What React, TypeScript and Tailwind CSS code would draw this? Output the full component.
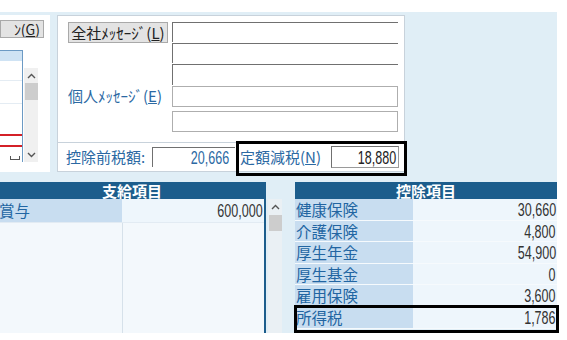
import React from 'react';

const jp = { fontFamily: '"Noto Sans CJK JP", "Noto Sans", sans-serif' };
const num = { fontFamily: '"Liberation Sans", Arial, sans-serif' };

const deductions = [
  { label: '健康保険', value: '30,660', h: 'h-[22px]' },
  { label: '介護保険', value: '4,800', h: 'h-[21px]' },
  { label: '厚生年金', value: '54,900', h: 'h-[22px]' },
  { label: '厚生基金', value: '0', h: 'h-[21px]' },
  { label: '雇用保険', value: '3,600', h: 'h-[22px]' },
  { label: '所得税', value: '1,786', h: 'h-[22px]' },
];

function Caret({ down }: { down?: boolean }) {
  return (
    <svg width="9" height="6" viewBox="0 0 9 6" className="block">
      <path d={down ? 'M1 1 L4.5 4.5 L8 1' : 'M1 5 L4.5 1.5 L8 5'} fill="none" stroke="#555" strokeWidth="1.4" />
    </svg>
  );
}

// narrow digits like the original UI font
function Num({ children }: { children: React.ReactNode }) {
  return (
    <span className="inline-block origin-right scale-x-[0.66] text-[19px] leading-none whitespace-nowrap" style={num}>
      {children}
    </span>
  );
}

export default function App() {
  return (
    <div className="relative w-[567px] h-[340px] bg-white overflow-hidden" style={jp}>
      <div className="pt-[12px]">
        <div className="w-[557px] h-[321px] bg-[#e0eef6] pt-[3px] flex flex-col">
          {/* top row */}
          <div className="flex h-[157px]">
            {/* left panel (cut off) */}
            <div className="w-[50px] h-full bg-white flex flex-col">
              <div className="mt-[5px] w-[44px] h-[18px] bg-[#e3e3e3] border border-[#a9a9a9] flex items-center justify-end pr-[3px] overflow-hidden text-[14px] leading-none text-[#222] whitespace-nowrap">
                ﾝ(<span className="underline">G</span>)
              </div>
              <div className="mt-[12px] flex">
                <div className="w-[23px] h-[112px] border-t border-r border-[#6c9ac4] flex flex-col">
                  <div className="h-[10px] bg-[#cfe3f4]" />
                  <div className="h-[20px] border-b border-[#e4ecf3]" />
                  <div className="h-[23px] border-b border-[#e4ecf3]" />
                  <div className="h-[30px]" />
                  <div className="h-[2px] bg-[#d42027]" />
                  <div className="h-[9px]" />
                  <div className="h-[2px] bg-[#d42027]" />
                  <div className="flex-1 flex items-end pb-[2px] pl-[10px]">
                    <div className="w-[10px] h-[4px] border-b border-l border-r border-[#555]" />
                  </div>
                </div>
                <div className="ml-[1px] mt-[18px] w-[14px] h-[94px] bg-[#f0f0f0] flex flex-col items-center">
                  <div className="pt-[5px] h-[15px]"><Caret /></div>
                  <div className="w-[13px] h-[17px] bg-[#cdcdcd]" />
                  <div className="flex-1" />
                  <div className="pb-[4px]"><Caret down /></div>
                </div>
              </div>
            </div>

            <div className="w-[7px]" />

            {/* message panel */}
            <div className="w-[348px] h-full bg-white border border-[#c8d2db] flex flex-col">
              <div className="h-[127px] flex border-b border-[#c8d2db]">
                <div className="w-[114px] pl-[10px] pt-[6px] flex flex-col">
                  <div className="w-[100px] h-[21px] bg-[#e3e3e3] border border-[#a9a9a9] flex items-center justify-center text-[15px] leading-none text-[#222] whitespace-nowrap">
                    全社ﾒｯｾｰｼﾞ(<span className="underline">L</span>)
                  </div>
                  <div className="mt-[43px] h-[20px] flex items-center text-[15px] text-[#2b69a3] whitespace-nowrap">
                    個人ﾒｯｾｰｼﾞ(<span className="underline">E</span>)
                  </div>
                </div>
                <div className="pt-[6px] flex flex-col w-[226px]">
                  <div className="h-[20px] border-t border-l border-[#707070] mb-[1px]" />
                  <div className="h-[20px] border-t border-l border-[#707070] mb-[1px]" />
                  <div className="h-[21px] border-t border-l border-[#707070]" />
                  <div className="mt-[1px] h-[21px] border border-[#aeaeae]" />
                  <div className="mt-[4px] h-[21px] border border-[#aeaeae]" />
                </div>
              </div>
              <div className="flex-1 flex items-center pl-[8px]">
                <span className="w-[86px] text-[15px] text-[#2b69a3] whitespace-nowrap">控除前税額:</span>
                <div className="w-[83px] h-[20px] border-t border-l border-[#707070] flex items-center justify-end pr-[6px] text-[#2b69a3]">
                  <Num>20,666</Num>
                </div>
                <span className="ml-[5px] w-[91px] text-[15px] text-[#2b69a3] whitespace-nowrap">
                  定額減税(<span className="underline">N</span>)
                </span>
                <div className="w-[68px] h-[22px] border border-[#9a9a9a] border-t-[#707070] border-l-[#707070] flex items-center justify-end pr-[2px] text-[#222]">
                  <Num>18,880</Num>
                </div>
              </div>
            </div>
          </div>

          <div className="h-[10px]" />

          {/* bottom row */}
          <div className="flex h-[151px]">
            {/* payments */}
            <div className="w-[266px] flex flex-col border-r-2 border-[#1c5d8c]">
              <div className="h-[17px] bg-[#1c5d8c] text-white font-bold text-[15px] leading-[17px] text-center">支給項目</div>
              <div className="flex h-[23px]">
                <div className="w-[123px] bg-[#c8ddf0] text-[15.5px] leading-[23px] text-[#2265a2] whitespace-nowrap overflow-hidden -ml-[1px]">賞与</div>
                <div className="flex-1 bg-[#eef6fc] flex items-center justify-end pr-[1px] text-[#333]"><Num>600,000</Num></div>
              </div>
              <div className="flex-1 flex bg-[#f3f8fc] border-t border-[#e2ebf3]">
                <div className="w-[123px] border-r border-[#d6e1ea]" />
              </div>
            </div>
            <div className="ml-[2px] mt-[17px] w-[14px] bg-[#eaf0f4] flex flex-col items-center">
              <div className="pt-[5px] h-[16px]"><Caret /></div>
              <div className="w-[13px] h-[16px] bg-[#cdcdcd]" />
            </div>

            <div className="w-[13px]" />

            {/* deductions */}
            <div className="w-[262px] flex flex-col">
              <div className="h-[17px] bg-[#1c5d8c] text-white font-bold text-[15px] leading-[17px] text-center">控除項目</div>
              {deductions.map((d) => (
                <div key={d.label} className={`flex ${d.h} border-b border-[#f6fafd]`}>
                  <div className="w-[118px] bg-[#c8ddf0] pl-[1px] text-[15.5px] leading-[21px] text-[#2265a2] whitespace-nowrap">{d.label}</div>
                  <div className="flex-1 bg-[#eef6fc] flex items-center justify-end pr-[1px] text-[#333]"><Num>{d.value}</Num></div>
                </div>
              ))}
            </div>
          </div>
        </div>
      </div>

      {/* highlight frames */}
      <div className="absolute left-[236px] top-[141px] w-[171px] h-[35px] border-[3px] border-black" />
      <div className="absolute left-[294px] top-[305px] w-[265px] h-[28px] border-[3px] border-black" />
    </div>
  );
}
